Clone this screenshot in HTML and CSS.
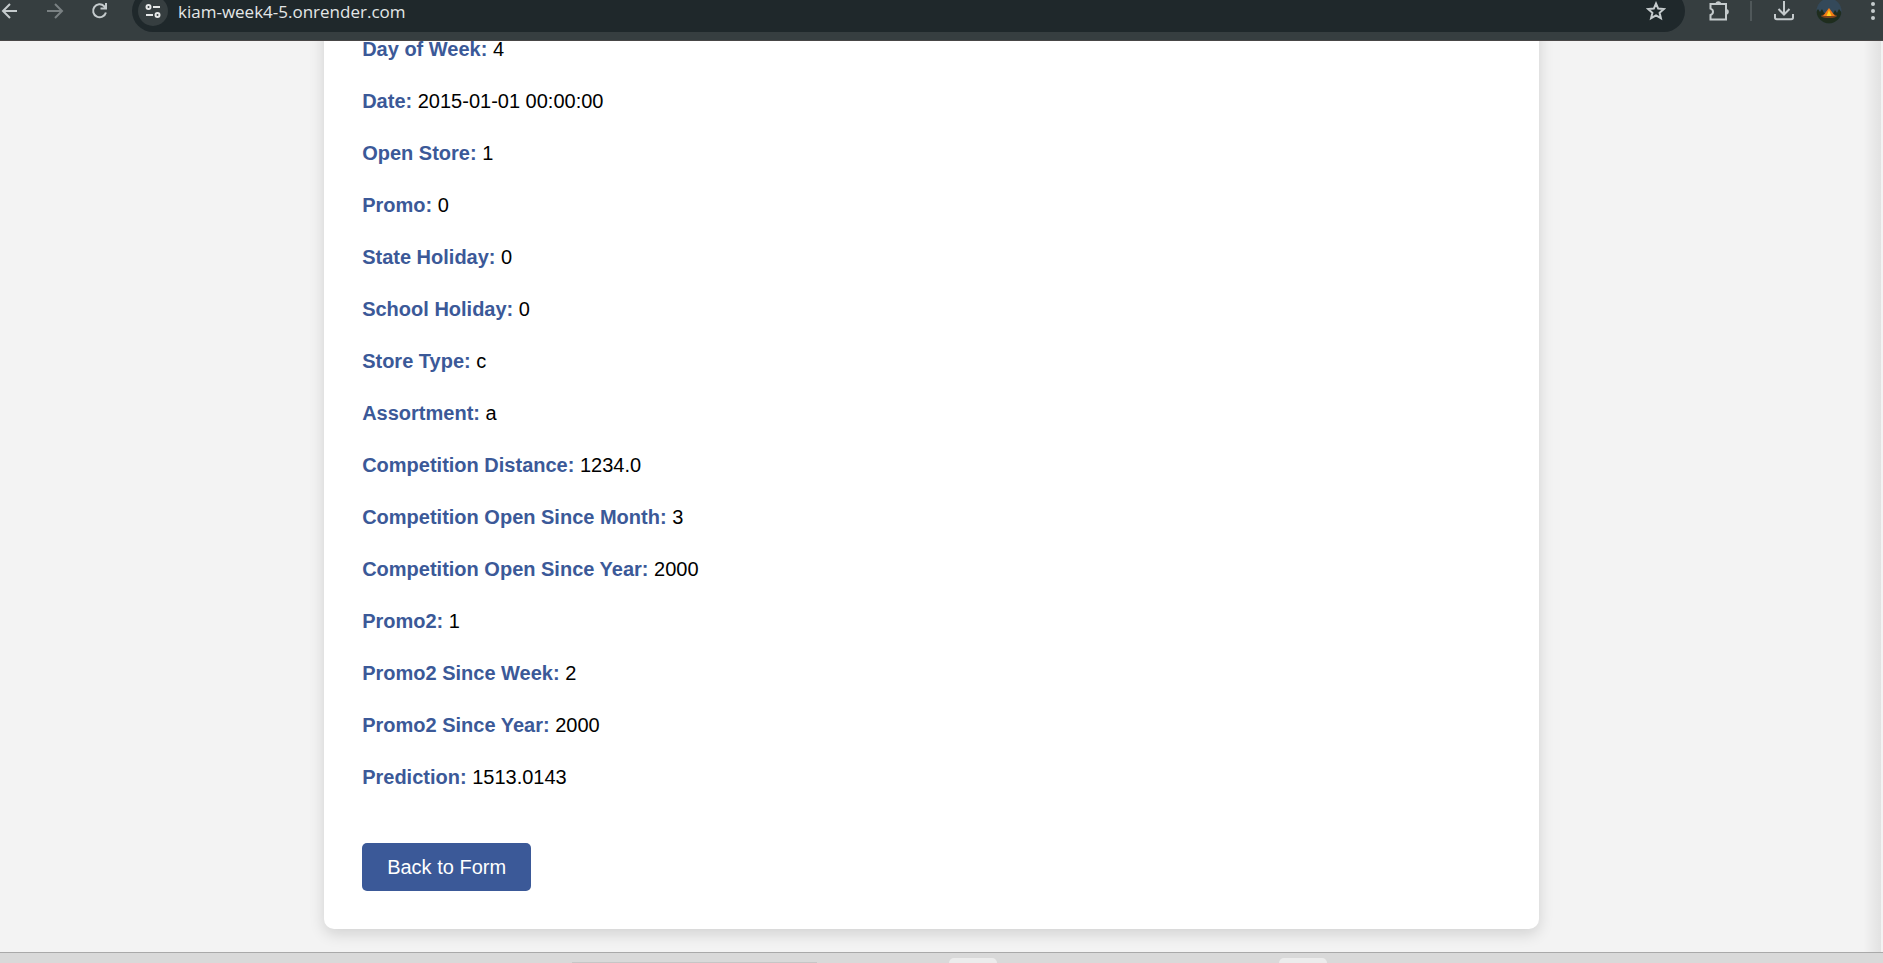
FILE: index.html
```html
<!DOCTYPE html>
<html lang="en">
<head>
<meta charset="utf-8">
<title>Prediction result</title>
<link rel="stylesheet" href="styles.css">
</head>
<body>
<header class="toolbar">
  <nav class="toolbar-nav" aria-label="History">
    <button class="tool" type="button" aria-label="Back"><svg class="icon" viewBox="0 0 20 20"><path d="M17 10H3M10 3l-7 7 7 7"/></svg></button>
    <button class="tool tool-dim" type="button" aria-label="Forward"><svg class="icon" viewBox="0 0 20 20"><path d="M2 10h15M10 3l7 7-7 7"/></svg></button>
    <button class="tool" type="button" aria-label="Reload"><svg class="icon" viewBox="0 0 20 20"><path d="M15.900 11.500A6.500 6.500 0 1 1 14.200 5.200L16 7M16 2v5.500h-5.500"/></svg></button>
  </nav>
  <div class="omnibox">
    <button class="site-info" type="button" aria-label="Site information"><svg class="icon-small" viewBox="0 0 16 16"><circle cx="3.500" cy="4" r="2"/><path d="M8 4h7M1 12h7"/><circle cx="12.500" cy="12" r="2"/></svg></button>
    <input class="url" type="text" aria-label="Address" value="kiam-week4-5.onrender.com">
    <button class="star" type="button" aria-label="Bookmark"><svg class="icon" viewBox="0 0 20 20"><path d="M10 2.500l2.200 5.100 5.600.500-4.200 3.700 1.300 5.400L10 14.300l-4.900 2.900 1.300-5.400L2.200 8.100l5.600-.500z"/></svg></button>
  </div>
  <div class="toolbar-actions">
    <button class="tool" type="button" aria-label="Extensions"><svg class="icon-large" viewBox="0 0 22 22"><path d="M2.500 4h15.500v15.500H2.500v-4.500q2.500-.800 2.500-3.200T2.500 8.600z"/><path class="solid" d="M7.500 4a2.800 2.800 0 0 1 5.600 0zM18 9a2.800 2.800 0 0 1 0 5.600z"/></svg></button>
    <span class="divider"></span>
    <button class="tool" type="button" aria-label="Downloads"><svg class="icon-large" viewBox="0 0 22 22"><path d="M11 1v13M5.500 9l5.500 5.500L16.500 9M2 14v3.500q0 1.800 1.800 1.800h14.400q1.800 0 1.800-1.800V14"/></svg></button>
    <button class="tool" type="button" aria-label="Profile"><svg class="avatar" viewBox="0 0 26 26"><defs><clipPath id="disc"><circle cx="13" cy="13" r="12.500"/></clipPath></defs><g clip-path="url(#disc)"><rect width="26" height="26" fill="#34495a"/><path d="M0 14l2-3 2 3 2-3 2 4 9 1 2-4 2 3 2-4 3 4v12H0z" fill="#1f2d1e"/><ellipse cx="13" cy="18" rx="8" ry="2" fill="#7b431c"/><path d="M13 10l6 8H7z" fill="#f47b16"/><path d="M13 12l2.500 6h-5z" fill="#ffd21f"/></g></svg></button>
    <button class="menu" type="button" aria-label="Menu"><svg class="dots" viewBox="0 0 6 20"><circle cx="3" cy="3" r="2"/><circle cx="3" cy="10" r="2"/><circle cx="3" cy="17" r="2"/></svg></button>
  </div>
</header>
<main class="page">
  <section class="card">
    <p class="row"><strong>Day of Week:</strong> 4</p>
    <p class="row"><strong>Date:</strong> 2015-01-01 00:00:00</p>
    <p class="row"><strong>Open Store:</strong> 1</p>
    <p class="row"><strong>Promo:</strong> 0</p>
    <p class="row"><strong>State Holiday:</strong> 0</p>
    <p class="row"><strong>School Holiday:</strong> 0</p>
    <p class="row"><strong>Store Type:</strong> c</p>
    <p class="row"><strong>Assortment:</strong> a</p>
    <p class="row"><strong>Competition Distance:</strong> 1234.0</p>
    <p class="row"><strong>Competition Open Since Month:</strong> 3</p>
    <p class="row"><strong>Competition Open Since Year:</strong> 2000</p>
    <p class="row"><strong>Promo2:</strong> 1</p>
    <p class="row"><strong>Promo2 Since Week:</strong> 2</p>
    <p class="row"><strong>Promo2 Since Year:</strong> 2000</p>
    <p class="row"><strong>Prediction:</strong> 1513.0143</p>
    <a class="back" href="#">Back to Form</a>
  </section>
  <div class="edge-shade"></div>
</main>
<footer class="taskbar">
  <span class="search-edge"></span>
  <span class="task task-first"></span>
  <span class="task task-second"></span>
</footer>
</body>
</html>
```

FILE: styles.css
```css
* { box-sizing: border-box; }

body {
  margin: 0;
  height: 100vh;
  display: flex;
  flex-direction: column;
  overflow: hidden;
  background: #f3f3f3;
  font-family: "Liberation Sans", Arial, sans-serif;
  font-size: 20px;
  color: #000;
}

button {
  padding: 0;
  border: 0;
  background: none;
  color: inherit;
  display: grid;
  place-items: center;
}

svg {
  display: block;
  fill: none;
  stroke: currentColor;
  stroke-width: 2;
}

/* Browser toolbar */
.toolbar {
  flex: none;
  height: 41px;
  display: flex;
  align-items: flex-end;
  overflow: hidden;
  padding-bottom: 8px;
  border-bottom: 1px solid #484646;
  background: #363e40;
  color: #c5cbcd;
}

.toolbar-nav { display: flex; gap: 5px; margin-left: -10px; margin-right: 12px; }
.tool { width: 40px; height: 42px; }
.tool-dim { color: #7a8183; }
.icon { width: 20px; height: 20px; }
.icon-small { width: 16px; height: 16px; }
.icon-large { width: 22px; height: 22px; }
.solid { fill: currentColor; stroke: none; }

.omnibox {
  flex: 1;
  display: flex;
  align-items: center;
  height: 42px;
  padding: 0 19px 0 6px;
  border-radius: 21px;
  background: #1f282b;
}

.site-info {
  width: 30px;
  height: 30px;
  border-radius: 50%;
  background: #363e40;
  color: #e6e8e8;
}

.url {
  flex: 1;
  min-width: 0;
  height: 30px;
  margin-left: 10px;
  padding: 0;
  border: 0;
  outline: 0;
  background: none;
  color: #e4e7e7;
  font-family: "Open Sans", "Noto Sans", sans-serif;
  font-size: 17px;
}

.toolbar-actions { display: flex; align-items: center; padding-left: 14px; }
.divider { width: 2px; height: 20px; margin: 0 12px 0 11px; background: #50585a; }
.avatar { width: 26px; height: 26px; stroke: none; }
.toolbar-actions .tool + .tool { margin-left: 5px; }
.menu { width: 20px; height: 42px; margin-left: 14px; }
.dots { width: 6px; height: 20px; fill: currentColor; stroke: none; }

/* Page */
.page {
  position: relative;
  flex: 1;
  min-height: 0;
  display: flex;
  flex-direction: column;
  justify-content: flex-end;
  align-items: center;
  overflow: hidden;
  padding: 0 20px 23px 0;
}

.card {
  flex: none;
  width: 65.2%;
  padding: 38px;
  border-radius: 10px;
  background: #fff;
  box-shadow: 0 5px 15px rgba(0, 0, 0, 0.14);
}

.row { margin: 0 0 20px; line-height: 32px; }
.row strong { color: #3b5998; }

.back {
  display: inline-block;
  margin-top: 30px;
  padding: 0 25px;
  border-radius: 5px;
  background: #3b5998;
  color: #fff;
  line-height: 48px;
  text-decoration: none;
  vertical-align: top;
}

.edge-shade {
  position: absolute;
  inset: 0 2px 0 auto;
  width: 18px;
  background: linear-gradient(to right, rgba(0, 0, 0, 0), rgba(0, 0, 0, 0.07));
}

/* Desktop taskbar */
.taskbar {
  flex: none;
  height: 11px;
  display: flex;
  align-items: flex-end;
  overflow: hidden;
  border-top: 1px solid #a9a9a9;
  background: #d9d9d9;
}

.search-edge { width: 13%; height: 1px; margin-left: 30.4%; background: #c6c6c6; }
.task { width: 48px; height: 5px; border-radius: 5px 5px 0 0; background: #ececec; }
.task-first { margin-left: 7%; }
.task-second { margin-left: 15%; }
```
